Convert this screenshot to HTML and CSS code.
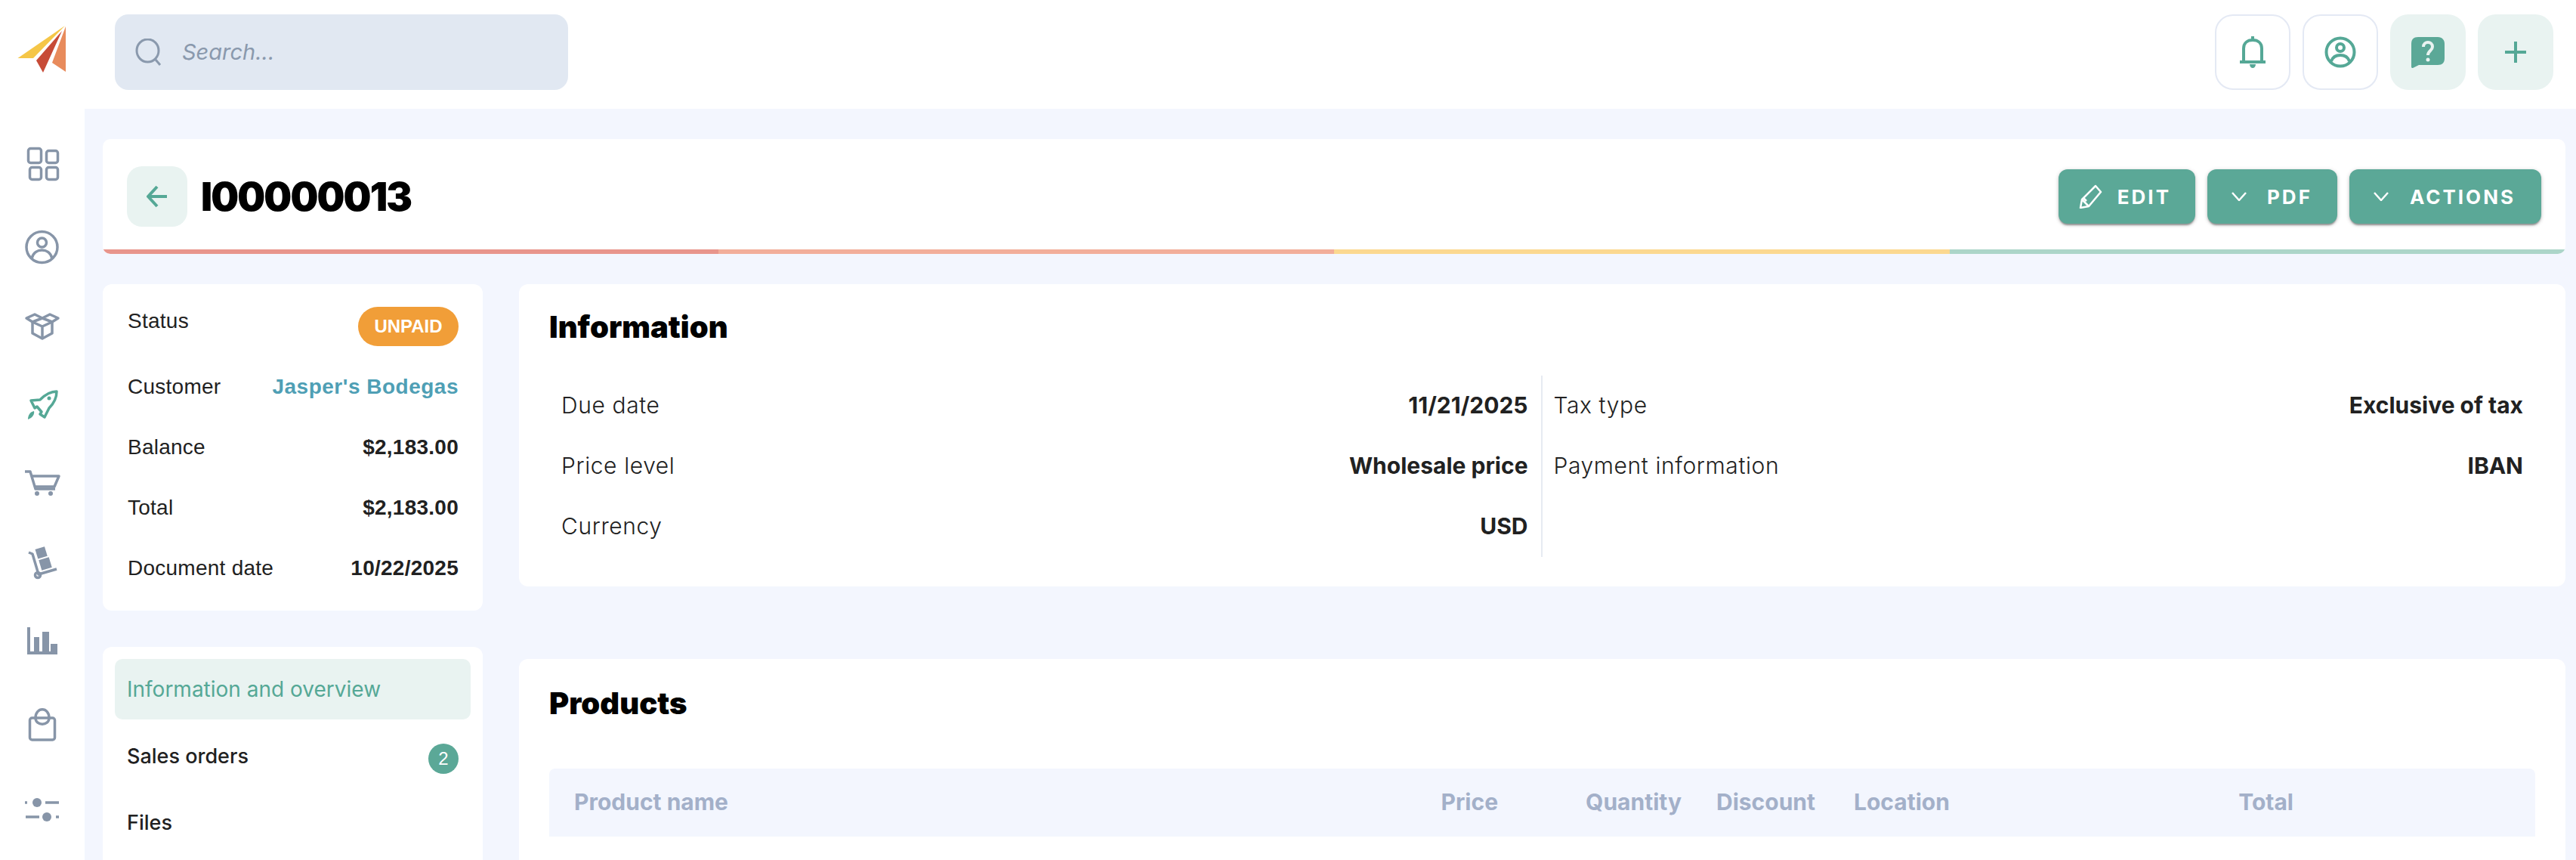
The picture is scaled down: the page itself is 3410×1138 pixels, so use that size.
FILE: index.html
```html
<!DOCTYPE html>
<html lang="en">
<head>
  <meta charset="UTF-8" />
  <meta name="viewport" content="width=device-width, initial-scale=1.0" />
  <title>I00000013</title>
  <link rel="stylesheet" href="styles.css">
</head>

<body>
  <header class="topbar">
    <a class="logo" href="#">
      <svg width="112" height="106" viewBox="0 19 112 106">
        <polygon points="23.5,77 86,34 44,77" fill="#f5c647" />
        <polygon points="48,80 82,41 57,96" fill="#c74b37" />
        <polygon points="87,35 69,83 87,95" fill="#e88b5c" />
      </svg>
    </a>
    <div class="search">
      <svg width="36" height="36" viewBox="0 0 36 36" class="icon-line">
        <ellipse cx="16.5" cy="16" rx="14.5" ry="15" />
        <path d="M27 28l6 7" />
      </svg>
      <span class="search-text">Search...</span>
    </div>
    <div class="top-actions">
      <button class="top-btn top-btn-outline" type="button">
        <svg width="40" height="44" viewBox="0 0 40 44" class="icon-green">
          <path d="M8 34V17C8 10 13 6 20 6s12 4 12 11v17" />
          <path d="M3 35h34" stroke-width="4" />
          <path d="M20 1v4" stroke-width="4" />
          <path class="icon-fill" d="M16 38h8c0 3-2 5-4 5s-4-2-4-5z" />
        </svg>
      </button>
      <button class="top-btn top-btn-outline" type="button">
        <svg width="42" height="42" viewBox="0 0 42 42" class="icon-green">
          <circle cx="21" cy="21" r="18.5" />
          <circle cx="21" cy="15" r="5" />
          <path d="M9 33c2-6 7-8 12-8s10 2 12 8" />
        </svg>
      </button>
      <button class="top-btn top-btn-soft" type="button">
        <svg width="46" height="42" viewBox="0 0 46 42">
          <path fill="#5ba897" d="M10 1h26c6 0 9 4 9 9v19c0 6-3 9-9 9H11l-8 4c-1 0-2 0-2-2V10C1 4 4 1 10 1z" />
          <path fill="none" stroke="#e9f3f1" stroke-width="4" d="M17 14c0-4 3-6 6-6s6 2 6 6c0 5-6 5-6 11" />
          <circle cx="23" cy="31" r="2.5" fill="#e9f3f1" />
        </svg>
      </button>
      <button class="top-btn top-btn-soft" type="button">
        <svg width="30" height="30" viewBox="0 0 30 30" class="icon-green">
          <path d="M15 1v28M1 15h28" />
        </svg>
      </button>
    </div>
  </header>

  <div class="layout">
    <nav class="sidebar">
      <!-- dashboard -->
      <svg width="48" height="48" viewBox="0 0 48 48" class="icon-nav">
        <rect x="5.5" y="4.5" width="17" height="19" rx="3" />
        <rect x="29.5" y="7.5" width="15" height="16" rx="3" />
        <rect x="7.5" y="29.5" width="15" height="16" rx="3" />
        <rect x="29.5" y="29.5" width="15" height="16" rx="3" />
      </svg>
      <!-- customers -->
      <svg width="48" height="48" viewBox="0 0 48 48" class="icon-nav side-gap">
        <circle cx="23.5" cy="24" r="20.5" />
        <circle cx="23.5" cy="18" r="6" />
        <path d="M10 39c2-8 8-11 13.500-11S35 31 37 39" />
      </svg>
      <!-- products -->
      <svg width="48" height="48" viewBox="0 0 48 48" class="icon-nav">
        <path d="M11 19l13-5 13 5v15l-13 7-13-7z" />
        <path d="M11 19l13 6 13-6M24 25v16" />
        <path d="M24 14L14 9 3 14l8 5M24 14l10-5 11 5-8 5" />
      </svg>
      <!-- sales -->
      <svg width="48" height="48" viewBox="0 0 48 48" class="icon-nav icon-nav-active">
        <path d="M43 7C36 7 28 11 21 18L9 19l5 10 3-2 6 7-2 3 6 4 6-12C39 23 43 15 43 7z" />
        <circle class="icon-dot" cx="33" cy="16" r="2.500" />
        <path class="icon-dot" d="M5 44c0-6 3-10 8-11 1 4-2 9-8 11z" />
      </svg>
      <!-- purchases -->
      <svg width="48" height="48" viewBox="0 0 48 48" class="icon-nav">
        <path d="M1 9h7l7 23h26" />
        <path d="M10 15h36l-6 14H15" />
        <circle class="icon-dot" cx="17" cy="38" r="3" />
        <circle class="icon-dot" cx="35" cy="38" r="3" />
      </svg>
      <!-- shipping -->
      <svg width="48" height="48" viewBox="0 0 48 48" class="icon-nav">
        <path d="M6 12l5 2 8 27 24-7" />
        <circle cx="18" cy="42" r="3.500" />
        <rect class="icon-dot" x="16" y="6" width="13" height="13" transform="rotate(-17 22 12)" />
        <rect class="icon-dot" x="21" y="20" width="14" height="14" transform="rotate(-17 28 27)" />
      </svg>
      <!-- reports -->
      <svg width="48" height="48" viewBox="0 0 48 48" class="icon-nav-fill">
        <rect x="4" y="7" width="4" height="36" />
        <rect x="13" y="20" width="7" height="23" />
        <rect x="24" y="13" width="9" height="30" />
        <rect x="35" y="29" width="9" height="14" />
        <rect x="4" y="39" width="40" height="4" />
      </svg>
      <!-- shop -->
      <svg width="48" height="48" viewBox="0 0 48 48" class="icon-nav side-gap">
        <rect x="7.500" y="16" width="33" height="29" rx="3" />
        <path d="M15 16c0-15 18-15 18 0M15 16c0 11 18 11 18 0" />
      </svg>
      <!-- settings -->
      <svg width="48" height="48" viewBox="0 0 48 48" class="icon-nav side-gap-wide">
        <path d="M1 16h3M28 16h18M2 35h18M42 35h4" />
        <circle class="icon-dot" cx="17" cy="16" r="6" />
        <circle class="icon-dot" cx="30" cy="35" r="6" />
      </svg>
    </nav>

    <main class="content">
      <section class="page-head">
        <div class="page-head-row">
          <button class="back-btn" type="button">
            <svg width="30" height="30" viewBox="0 0 30 30" class="icon-green">
              <path d="M28 15H3M15 2L3 15l12 13" />
            </svg>
          </button>
          <h1>I00000013</h1>
          <div class="head-actions">
            <button class="action-btn action-btn-edit" type="button">
              <svg width="32" height="32" viewBox="0 0 32 32" class="icon-white">
                <path d="M23 2l7 8-16 19-11 2 2-11z" />
                <path d="M5 20l9 9M7 18l4 4" />
              </svg>
              EDIT
            </button>
            <button class="action-btn action-btn-pdf" type="button">
              <svg width="20" height="12" viewBox="0 0 20 12" class="icon-white">
                <path d="M1 1l9 10 9-10" />
              </svg>
              PDF
            </button>
            <button class="action-btn" type="button">
              <svg width="20" height="12" viewBox="0 0 20 12" class="icon-white">
                <path d="M1 1l9 10 9-10" />
              </svg>
              ACTIONS
            </button>
          </div>
        </div>
        <div class="progress">
          <span class="progress-red"></span>
          <span class="progress-orange"></span>
          <span class="progress-yellow"></span>
          <span class="progress-green"></span>
        </div>
      </section>

      <div class="columns">
        <aside class="left-col">
          <section class="card summary">
            <div class="summary-row summary-row-status">
              <span class="summary-status-label">Status</span>
              <span class="badge-unpaid">UNPAID</span>
            </div>
            <div class="summary-row">
              <span>Customer</span>
              <a class="summary-link" href="#">Jasper's Bodegas</a>
            </div>
            <div class="summary-row">
              <span>Balance</span>
              <strong>$2,183.00</strong>
            </div>
            <div class="summary-row">
              <span>Total</span>
              <strong>$2,183.00</strong>
            </div>
            <div class="summary-row">
              <span>Document date</span>
              <strong>10/22/2025</strong>
            </div>
          </section>

          <section class="card side-menu">
            <a class="side-menu-item side-menu-active" href="#">Information and overview</a>
            <a class="side-menu-item" href="#">
              Sales orders
              <span class="count">2</span>
            </a>
            <a class="side-menu-item" href="#">Files</a>
          </section>
        </aside>

        <div class="right-col">
          <section class="card info">
            <h2>Information</h2>
            <div class="info-grid">
              <div class="info-col">
                <div class="info-row"><span>Due date</span><strong>11/21/2025</strong></div>
                <div class="info-row"><span>Price level</span><strong>Wholesale price</strong></div>
                <div class="info-row"><span>Currency</span><strong>USD</strong></div>
              </div>
              <div class="info-col info-col-right">
                <div class="info-row"><span>Tax type</span><strong>Exclusive of tax</strong></div>
                <div class="info-row"><span>Payment information</span><strong>IBAN</strong></div>
              </div>
            </div>
          </section>

          <section class="card products">
            <h2>Products</h2>
            <div class="table-head">
              <span>Product name</span>
              <span class="cell-right">Price</span>
              <span class="cell-right">Quantity</span>
              <span class="cell-right">Discount</span>
              <span class="cell-location">Location</span>
              <span class="cell-right">Total</span>
            </div>
          </section>
        </div>
      </div>
    </main>
  </div>
</body>
</html>
```

FILE: styles.css
```css
:root {
  --green: #5ba897;
  --green-text: #55a896;
  --green-soft: #e9f3f1;
  --page: #f3f6fe;
  --slate: #8795a8;
  --ink: #212121;
}

* {
  box-sizing: border-box;
  margin: 0;
  padding: 0;
}

html, body {
  height: 100%;
  overflow: hidden;
  background: #ffffff;
  font-family: Inter, "Noto Sans", sans-serif;
  color: var(--ink);
}

button {
  border: none;
  font-family: inherit;
  cursor: pointer;
}

a {
  text-decoration: none;
  color: inherit;
}

svg {
  display: block;
  flex: none;
}

/* icon stroke sets */
.icon-line, .icon-green, .icon-white, .icon-nav {
  fill: none;
  stroke-width: 3;
  stroke-linejoin: round;
}

.icon-line {
  stroke: #8a99ad;
}

.icon-green {
  stroke: var(--green-text);
  stroke-width: 4;
}

.icon-green .icon-fill {
  fill: var(--green-text);
  stroke: none;
}

.icon-white {
  stroke: #ffffff;
  stroke-width: 2.5;
}

.icon-nav {
  stroke: var(--slate);
  stroke-width: 3.5;
}

.icon-nav-fill {
  fill: var(--slate);
}

.icon-nav .icon-dot {
  fill: var(--slate);
  stroke: none;
}

.icon-nav-active {
  stroke: var(--green-text);
}

.icon-nav-active .icon-dot {
  fill: var(--green-text);
}

/* top bar */
.topbar {
  display: flex;
  align-items: flex-start;
  height: 144px;
  padding: 19px 30px 0 0;
}

.logo {
  width: 112px;
  flex: none;
}

.search {
  display: flex;
  align-items: center;
  gap: 26px;
  width: 600px;
  height: 100px;
  margin-left: 40px;
  padding-left: 27px;
  background: #e1e8f2;
  border-radius: 18px;
}

.search-text {
  margin-top: -2px;
  font-size: 29px;
  font-style: italic;
  color: #8a99ad;
}

.top-actions {
  display: flex;
  gap: 16px;
  margin-left: auto;
}

.top-btn {
  display: flex;
  align-items: center;
  justify-content: center;
  width: 100px;
  height: 100px;
  border-radius: 24px;
}

.top-btn-outline {
  background: #ffffff;
  border: 2px solid #e4e9f4;
}

.top-btn-soft {
  background: var(--green-soft);
}

/* layout */
.layout {
  display: flex;
  height: calc(100% - 144px);
}

.sidebar {
  display: flex;
  flex-direction: column;
  align-items: center;
  gap: 56px;
  width: 112px;
  flex: none;
  padding-top: 48px;
}

.side-gap {
  margin-top: 7px;
}

.side-gap-wide {
  margin-top: 8px;
}

.content {
  flex: 1;
  min-width: 0;
  padding: 40px 14px 0 24px;
  background: var(--page);
  overflow: hidden;
}

/* page head */
.page-head {
  display: flex;
  flex-direction: column;
  height: 152px;
  background: #ffffff;
  border-radius: 10px;
  overflow: hidden;
}

.page-head-row {
  display: flex;
  align-items: center;
  flex: 1;
  padding: 6px 32px 0;
}

.back-btn {
  display: flex;
  align-items: center;
  justify-content: center;
  width: 80px;
  height: 80px;
  background: var(--green-soft);
  border-radius: 20px;
}

h1 {
  margin-left: 18px;
  font-size: 52px;
  font-weight: 900;
  letter-spacing: -1.9px;
  color: #000000;
}

.head-actions {
  display: flex;
  gap: 16px;
  margin-left: auto;
}

.action-btn {
  display: flex;
  align-items: center;
  gap: 28px;
  height: 72px;
  padding: 0 34px 0 32px;
  background: var(--green);
  color: #ffffff;
  font-size: 26px;
  font-weight: 700;
  letter-spacing: 3px;
  border-radius: 12px;
  box-shadow: 0 3px 2px -1px rgba(0, 0, 0, 0.3), 0 2px 4px 0 rgba(0, 0, 0, 0.14), 0 1px 6px 0 rgba(0, 0, 0, 0.12);
}

.action-btn-edit {
  gap: 20px;
  padding: 0 32px 0 26px;
}

.action-btn-pdf {
  gap: 27px;
  padding-right: 33px;
}

.progress {
  display: flex;
  height: 6px;
  flex: none;
}

.progress span {
  flex: 1;
}

.progress-red { background: #e8958c; }
.progress-orange { background: #f2ae9a; }
.progress-yellow { background: #fbd890; }
.progress-green { background: #acd5c9; }

/* columns */
.columns {
  display: flex;
  gap: 48px;
  margin-top: 40px;
}

.left-col {
  width: 503px;
  flex: none;
}

.right-col {
  flex: 1;
  min-width: 0;
}

.card {
  background: #ffffff;
  border-radius: 12px;
}

/* summary card */
.summary {
  padding: 30px 32px 16px 33px;
  font-family: "Liberation Sans", Arial, sans-serif;
  font-size: 28px;
  letter-spacing: 0.25px;
}

.summary-row {
  display: flex;
  align-items: center;
  justify-content: space-between;
  height: 80px;
}

.summary-row-status {
  align-items: flex-start;
  height: 66px;
}

.summary-status-label {
  line-height: 38px;
}

.summary-link {
  font-weight: 700;
  letter-spacing: 0.5px;
  color: #4f9fb5;
}

.badge-unpaid {
  display: flex;
  align-items: center;
  justify-content: center;
  width: 133px;
  height: 52px;
  background: #f19e38;
  color: #ffffff;
  font-size: 24px;
  font-weight: 700;
  letter-spacing: 0;
  border-radius: 26px;
}

/* left menu */
.side-menu {
  margin-top: 48px;
  padding: 16px 16px 0;
  height: 400px;
}

.side-menu-item {
  display: flex;
  align-items: center;
  justify-content: space-between;
  height: 80px;
  margin-bottom: 8px;
  padding: 0 0 0 16px;
  font-size: 27px;
  font-weight: 500;
}

.side-menu-active {
  background: var(--green-soft);
  color: var(--green-text);
  font-size: 28px;
  font-weight: 400;
  border-radius: 10px;
}

.count {
  display: flex;
  align-items: center;
  justify-content: center;
  width: 40px;
  height: 40px;
  margin-top: 8px;
  margin-right: 16px;
  background: var(--green);
  color: #ffffff;
  font-family: "Liberation Sans", Arial, sans-serif;
  font-size: 24px;
  font-weight: 400;
  border-radius: 50%;
}

/* info card */
.info {
  height: 400px;
  padding: 32px 40px 0;
}

h2 {
  font-size: 40px;
  font-weight: 900;
  color: #000000;
  letter-spacing: 0;
}

.info-grid {
  display: grid;
  grid-template-columns: 1fr 1fr;
  margin-top: 40px;
}

.info-col {
  height: 240px;
  padding: 0 17px 0 16px;
  border-right: 2px solid #e6eaf2;
}

.info-col-right {
  padding: 0 16px 0 15px;
  border-right: none;
}

.info-row {
  display: flex;
  align-items: center;
  justify-content: space-between;
  height: 80px;
  margin-top: -1px;
  margin-bottom: 1px;
  font-size: 30px;
  font-weight: 300;
  letter-spacing: 0.6px;
}

.info-row strong {
  font-weight: 700;
  letter-spacing: 0;
}

/* products card */
.products {
  margin-top: 96px;
  height: 400px;
  padding: 34px 40px 0;
}

.table-head {
  display: grid;
  grid-template-columns: 1000px 223px 243px 177px 396px 237px;
  align-items: center;
  height: 90px;
  margin-top: 62px;
  padding: 0 0 2px 33px;
  background: var(--page);
  border-radius: 8px 8px 0 0;
  font-size: 30px;
  font-weight: 700;
  color: #a3b0c9;
}

.cell-right {
  text-align: right;
}

.cell-location {
  padding-left: 51px;
}
```
